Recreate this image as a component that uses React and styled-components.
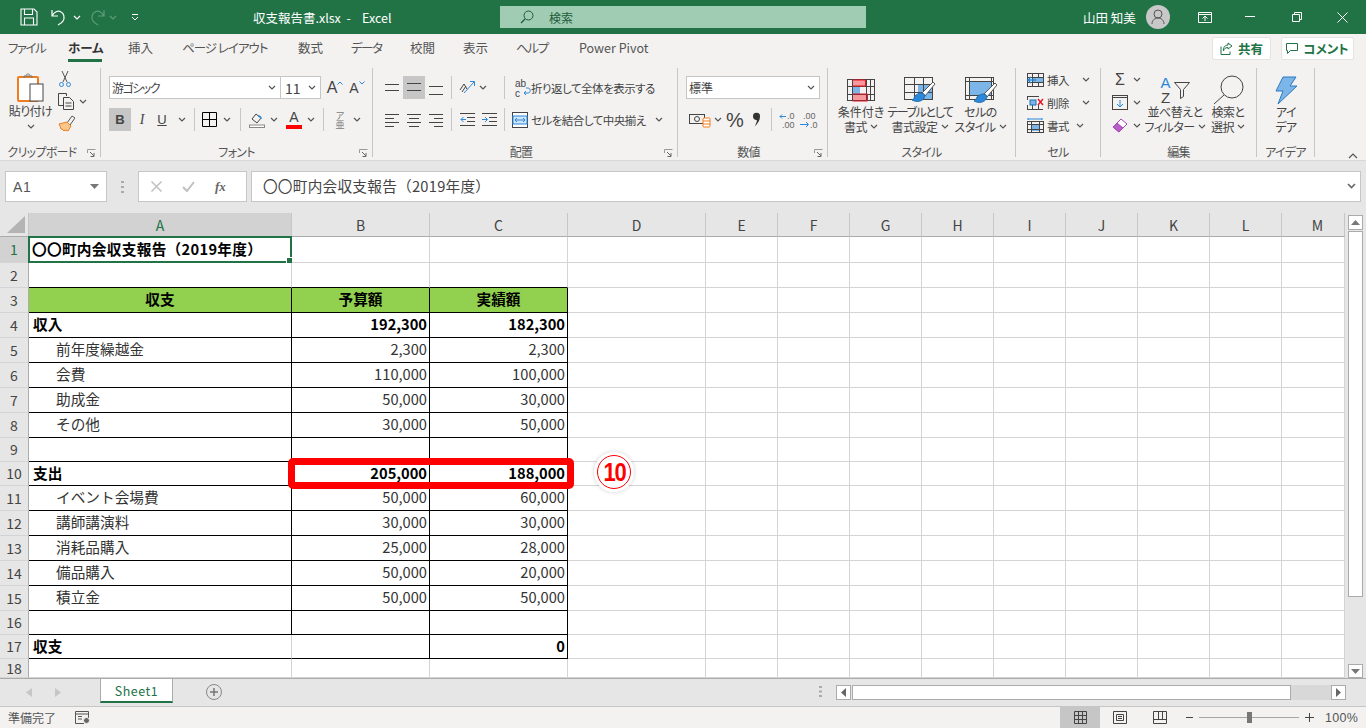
import React from "react";
import styled, { createGlobalStyle } from "styled-components";

const GREEN = "#217346";
const UI = `"Noto Sans CJK JP", "Noto Sans", sans-serif`;

const Global = createGlobalStyle`
  html, body { margin: 0; padding: 0; background: #fff; overflow: hidden; }
  * { box-sizing: border-box; }
  body { font-family: ${UI}; font-feature-settings: "palt"; color: #444; }
`;

const Page = styled.div`
  width: 1366px;
  height: 728px;
  display: flex;
  flex-direction: column;
  overflow: hidden;
`;

/* ---------- title bar ---------- */
const TitleBar = styled.div`
  height: 34px;
  flex: none;
  background: ${GREEN};
  display: flex;
  align-items: center;
  color: #fff;
  font-size: 12.5px;
`;
const Slot = styled.div`
  width: ${(p) => p.$w}px;
  flex: none;
  display: flex;
  align-items: center;
  justify-content: ${(p) => p.$justify || "flex-start"};
  margin-left: ${(p) => p.$ml || 0}px;
  margin-top: ${(p) => p.$mt || 0}px;
  white-space: nowrap;
`;
const SearchBox = styled.div`
  width: 366px;
  height: 22px;
  background: #a0ccb3;
  color: #1d5c3a;
  display: flex;
  align-items: center;
  gap: 15px;
  padding-left: 20px;
  font-size: 12px;
`;
const Avatar = styled.div`
  width: 24px;
  height: 24px;
  border-radius: 50%;
  background: #c8c8c8;
  display: flex;
  align-items: center;
  justify-content: center;
`;

/* ---------- tabs ---------- */
const TabRow = styled.div`
  height: 28px;
  flex: none;
  background: #f3f2f1;
  display: flex;
  align-items: center;
  padding-left: 8px;
`;
const Tab = styled.div`
  width: ${(p) => p.$w}px;
  flex: none;
  font-size: 12.5px;
  height: 28px;
  line-height: 28px;
  white-space: nowrap;
  position: relative;
  letter-spacing: ${(p) => p.$sp || 0}px;
  color: ${(p) => (p.$active ? "#333" : "#555")};
  font-weight: ${(p) => (p.$active ? 700 : 400)};
  &::after {
    content: "";
    display: ${(p) => (p.$active ? "block" : "none")};
    position: absolute;
    left: 0;
    top: 25px;
    width: 34px;
    height: 3px;
    background: ${GREEN};
  }
`;
const ShareBtn = styled.div`
  width: ${(p) => p.$w}px;
  height: 23px;
  margin-left: ${(p) => p.$ml}px;
  background: #fff;
  border: 1px solid #e4e3e2;
  border-radius: 2px;
  color: ${GREEN};
  font-weight: 700;
  font-size: 12.5px;
  display: flex;
  align-items: center;
  justify-content: center;
  gap: 5px;
`;

/* ---------- ribbon ---------- */
const Ribbon = styled.div`
  height: 99px;
  flex: none;
  background: #f3f2f1;
  display: flex;
  padding-top: 6px;
  border-bottom: 1px solid #d8d8d8;
  position: relative;
`;
const Group = styled.div`
  width: ${(p) => p.$w}px;
  height: 89px;
  flex: none;
  border-right: 1px solid #c6c6c6;
  display: flex;
  flex-direction: column;
`;
const GroupBody = styled.div`
  height: 76px;
  flex: none;
  display: flex;
  flex-direction: ${(p) => p.$dir || "row"};
  padding: ${(p) => p.$pad || "0"};
  gap: ${(p) => p.$gap || 0}px;
`;
const GroupFoot = styled.div`
  height: 13px;
  line-height: 16px;
  font-size: 12px;
  letter-spacing: -0.7px;
  color: #555;
  white-space: nowrap;
  text-align: center;
  position: relative;
  padding-right: ${(p) => p.$shift || 0}px;
`;
const Launcher = styled.svg`
  position: absolute;
  right: 4px;
  top: 5px;
`;
const Row = styled.div`
  height: 23px;
  display: flex;
  align-items: center;
  flex: none;
`;
const Select = styled.div`
  width: ${(p) => p.$w}px;
  height: 23px;
  background: #fff;
  border: 1px solid #c6c6c6;
  border-left-width: ${(p) => (p.$joined ? 0 : 1)}px;
  display: flex;
  align-items: center;
  justify-content: space-between;
  padding: 0 4px 0 ${(p) => p.$pl || 2}px;
  font-size: ${(p) => p.$size || 12}px;
  letter-spacing: ${(p) => p.$sp || 0}px;
  color: #444;
  flex: none;
  white-space: nowrap;
`;
const ToolBtn = styled.div`
  width: ${(p) => p.$w || 22}px;
  height: 23px;
  margin-left: ${(p) => p.$ml || 0}px;
  background: ${(p) => (p.$on ? "#c6c6c6" : "transparent")};
  display: flex;
  flex-direction: ${(p) => p.$dir || "row"};
  align-items: center;
  justify-content: center;
  flex: none;
  position: relative;
`;
const Glyph = styled.span`
  font-family: ${(p) => p.$font || `"Liberation Sans", sans-serif`};
  font-size: ${(p) => p.$size || 14}px;
  font-weight: ${(p) => p.$weight || 400};
  font-style: ${(p) => (p.$italic ? "italic" : "normal")};
  text-decoration: ${(p) => (p.$under ? "underline" : "none")};
  color: ${(p) => p.$color || "#444"};
  line-height: 1;
  text-align: center;
`;
const ColorBar = styled.div`
  width: 16px;
  height: 4px;
  background: #ff0000;
  flex: none;
  margin-top: 1px;
`;
const Caret = styled.svg`
  flex: none;
  margin-bottom: 9px;
`;
const VSep = styled.div`
  width: 1px;
  height: 23px;
  background: #c6c6c6;
  flex: none;
  margin-left: ${(p) => p.$ml || 0}px;
`;
const ChevSvg = styled.svg`
  flex: none;
  margin-left: ${(p) => p.$ml}px;
`;
const Chevron = ({ ml = 0, color = "#555" }) => (
  <ChevSvg width="8" height="5" viewBox="0 0 8 5" $ml={ml}>
    <path d="M1 1l3 3 3-3" fill="none" stroke={color} strokeWidth="1.2" />
  </ChevSvg>
);
const RowLabel = styled.span`
  font-size: 11.5px;
  letter-spacing: -0.5px;
  color: #444;
  white-space: nowrap;
  flex: none;
  margin-left: ${(p) => p.$ml || 0}px;
`;
const BigBtn = styled.div`
  width: ${(p) => p.$w}px;
  margin-left: ${(p) => p.$ml || 0}px;
  padding-top: ${(p) => p.$top || 7}px;
  flex: none;
  display: flex;
  flex-direction: column;
  align-items: center;
`;
const IconBox = styled.div`
  height: ${(p) => p.$h || 30}px;
  display: flex;
  align-items: center;
  justify-content: center;
`;
const SortLetters = styled.div`
  display: flex;
  flex-direction: column;
  flex: none;
  margin-right: 3px;
`;
const BigLabel = styled.div`
  font-size: 12px;
  line-height: 14.5px;
  letter-spacing: ${(p) => p.$sp ?? -0.5}px;
  color: #444;
  text-align: center;
  white-space: nowrap;
  display: flex;
  align-items: center;
  gap: 3px;
  justify-content: center;
`;
const StackCol = styled.div`
  display: flex;
  flex-direction: column;
  flex: none;
  padding: ${(p) => p.$pad || 0};
  gap: ${(p) => p.$gap || 0}px;
`;

/* ---------- formula bar ---------- */
const FormulaArea = styled.div`
  height: 52px;
  flex: none;
  background: #e6e6e6;
  display: flex;
  align-items: flex-start;
  padding: 10px 5px 0 5px;
`;
const NameBox = styled.div`
  width: 102px;
  height: 31px;
  background: #fff;
  border: 1px solid #c6c6c6;
  display: flex;
  align-items: center;
  justify-content: space-between;
  padding: 0 7px 0 7px;
  font-family: "Liberation Sans", sans-serif;
  font-size: 14px;
  color: #555;
  letter-spacing: 0.6px;
`;
const Grip = styled.div`
  width: 31px;
  height: 31px;
  flex: none;
  display: flex;
  align-items: center;
  justify-content: center;
`;
const FxBox = styled.div`
  width: 109px;
  height: 31px;
  background: #fff;
  border: 1px solid #c6c6c6;
  display: flex;
  align-items: center;
  padding-left: 12px;
  gap: 20px;
  flex: none;
`;
const FormulaInput = styled.div`
  width: 1111px;
  height: 31px;
  margin-left: 4px;
  background: #fff;
  border: 1px solid #c6c6c6;
  display: flex;
  align-items: center;
  justify-content: space-between;
  padding: 0 4px 2px 11px;
  font-size: 14.67px;
  letter-spacing: 0.25px;
  font-feature-settings: normal;
  text-spacing-trim: space-all;
  color: #444;
`;

/* ---------- sheet ---------- */
const SheetArea = styled.div`
  height: 465px;
  flex: none;
  display: flex;
  position: relative;
  background: #e6e6e6;
`;
const SheetGrid = styled.div`
  width: 1345px;
  flex: none;
  display: grid;
  grid-template-columns: 29px 263px 138px 138px 138px repeat(8, 72px) 63px;
  grid-template-rows: ${(p) => p.$rows};
  font-size: 14.67px;
  font-feature-settings: normal;
  text-spacing-trim: space-all;
`;
const Corner = styled.div`
  background: #e6e6e6;
  border-right: 1px solid #c6c6c6;
  border-bottom: 1px solid #ababab;
  display: flex;
  align-items: flex-end;
  justify-content: flex-end;
  padding: 0 3px 3px 0;
`;
const ColHead = styled.div`
  background: ${(p) => (p.$active ? "#d2d2d2" : "#e6e6e6")};
  color: ${(p) => (p.$active ? GREEN : "#444")};
  border-right: 1px solid #c6c6c6;
  border-bottom: 1px solid #ababab;
  display: flex;
  align-items: center;
  justify-content: center;
  font-size: 14px;
  padding-top: 1px;
  padding-left: ${(p) => (p.$cut ? 9 : 0)}px;
`;
const RowHead = styled.div`
  background: ${(p) => (p.$active ? "#d2d2d2" : "#e6e6e6")};
  color: ${(p) => (p.$active ? GREEN : "#444")};
  border-right: 1px solid #ababab;
  border-bottom: 1px solid #d4d4d4;
  display: flex;
  align-items: center;
  justify-content: center;
  font-size: 14px;
  padding-bottom: 1px;
`;
const Cell = styled.div`
  background: ${(p) => p.$fill || "#fff"};
  border-right: 1px solid ${(p) => (p.$blackRight ? "#000" : "#d4d4d4")};
  border-bottom: 1px solid ${(p) => (p.$blackBottom ? "#000" : "#d4d4d4")};
  display: flex;
  align-items: center;
  justify-content: ${(p) => p.$justify || "flex-start"};
  padding-left: ${(p) => p.$indent || 0}px;
  padding-right: ${(p) => (p.$justify === "flex-end" ? 2 : 0)}px;
  padding-bottom: 3px;
  letter-spacing: ${(p) => p.$sp || 0}px;
  font-weight: ${(p) => (p.$bold ? 700 : 400)};
  color: ${(p) => (p.$bold ? "#000" : "#333")};
  white-space: nowrap;
  min-width: 0;
  overflow: visible;
  position: relative;
`;
const Selection = styled.div`
  position: absolute;
  left: -1px;
  top: -1px;
  right: -1px;
  bottom: -1px;
  border: 2px solid ${GREEN};
  pointer-events: none;
  &::after {
    content: "";
    position: absolute;
    right: -4px;
    bottom: -4px;
    width: 6px;
    height: 6px;
    background: ${GREEN};
    border: 1px solid #fff;
  }
`;
const RedFrame = styled.div`
  position: absolute;
  left: 288px;
  top: 245px;
  width: 286px;
  height: 31px;
  border: 7px solid #ff0000;
  border-radius: 5px;
`;
const Badge = styled.div`
  position: absolute;
  left: 594px;
  top: 239px;
  width: 40px;
  height: 40px;
  border-radius: 50%;
  background: #fff;
  box-shadow: 0 0 4px rgba(0, 0, 0, 0.18);
  display: flex;
  align-items: center;
  justify-content: center;
`;
const BadgeRing = styled.div`
  width: 34px;
  height: 34px;
  border-radius: 50%;
  border: 1px solid #ff0000;
  display: flex;
  align-items: center;
  justify-content: center;
`;
const BadgeNum = styled.span`
  color: #ff0000;
  font-family: "Liberation Sans", sans-serif;
  font-weight: 700;
  font-size: 25px;
  letter-spacing: -1.5px;
  transform: scaleX(0.88);
`;

const VScroll = styled.div`
  width: 21px;
  flex: none;
  display: flex;
  flex-direction: column;
  padding: 2px 0 0 3px;
`;
const ScrollBtn = styled.div`
  width: ${(p) => p.$w || 15}px;
  height: ${(p) => p.$h || 15}px;
  margin-top: ${(p) => (p.$end ? "auto" : "0")};
  background: #fff;
  border: 1px solid #ababab;
  display: flex;
  align-items: center;
  justify-content: center;
  flex: none;
`;
const VThumb = styled.div`
  width: 15px;
  height: 366px;
  margin-top: 1px;
  background: #fff;
  border: 1px solid #ababab;
  flex: none;
`;

/* ---------- sheet tabs, status ---------- */
const TabsBar = styled.div`
  height: 29px;
  flex: none;
  background: #e6e6e6;
  border-top: 1px solid #ababab;
  border-bottom: 1px solid #c6c6c6;
  display: flex;
  align-items: flex-start;
  position: relative;
`;
const SheetTab = styled.div`
  width: 73px;
  height: 25px;
  margin-top: -1px;
  background: #fff;
  border: 1px solid #ababab;
  border-bottom: 2px solid ${GREEN};
  color: ${GREEN};
  font-size: 12.5px;
  display: flex;
  align-items: center;
  justify-content: center;
  letter-spacing: 0.5px;
  flex: none;
`;
const HScroll = styled.div`
  display: flex;
  flex: none;
`;
const HThumb = styled.div`
  width: 439px;
  height: 15px;
  margin-left: 1px;
  background: #fff;
  border: 1px solid #ababab;
  flex: none;
`;
const HTrack = styled.div`
  width: 40px;
  height: 15px;
  background: #d8d8d8;
  flex: none;
`;
const StatusBar = styled.div`
  height: 21px;
  flex: none;
  background: #f3f2f1;
  display: flex;
  align-items: center;
  font-size: 12px;
  color: #555;
`;
const ViewBtn = styled.div`
  width: 40px;
  height: 21px;
  background: ${(p) => (p.$on ? "#c6c6c6" : "transparent")};
  display: flex;
  align-items: center;
  justify-content: center;
  flex: none;
`;
const SliderTrack = styled.div`
  width: 100px;
  height: 1px;
  background: #a6a6a6;
  margin-left: 6px;
  position: relative;
  flex: none;
  &::after {
    content: "";
    position: absolute;
    left: 48px;
    top: -5px;
    width: 5px;
    height: 11px;
    background: #777;
  }
`;
const Zoom = styled.div`
  margin-left: 11px;
  font-size: 12.5px;
  font-family: "Liberation Sans", sans-serif;
  color: #555;
  letter-spacing: 0.3px;
  flex: none;
`;

/* ---------- icons ---------- */
const IconSvg = styled.svg`
  flex: none;
  display: block;
`;
const Svg = ({ w, h, children }) => (
  <IconSvg width={w} height={h} viewBox={`0 0 ${w} ${h}`} fill="none">
    {children}
  </IconSvg>
);
const DARK = "#444";
const BLUE = "#2b88d8";
const ORANGE = "#ed7d1f";
const SVGFONT = "Liberation Sans, sans-serif";

const LauncherIcon = () => (
  <Launcher width="9" height="9" viewBox="0 0 9 9" fill="none">
    <path d="M0.5 4V0.5H8.5" stroke="#999" />
    <path d="M3 3l4 4M7 4v3.5H3.5" stroke="#666" />
  </Launcher>
);
const Lines = ({ w = 14, h = 15, ys }) => (
  <Svg w={w} h={h}>
    {ys.map(([x1, x2, y]) => (
      <path key={`${y}-${x1}`} d={`M${x1} ${y}.5H${x2}`} stroke={DARK} />
    ))}
  </Svg>
);
const Grid3 = ({ w, h, cols, rows, color = DARK }) => (
  <g stroke={color}>
    <rect x="0.5" y="0.5" width={w - 1} height={h - 1} />
    {cols.map((x) => <path key={x} d={`M${x}.5 0V${h}`} />)}
    {rows.map((y) => <path key={y} d={`M0 ${y}.5H${w}`} />)}
  </g>
);
const Brush = ({ x, y }) => (
  <g transform={`translate(${x} ${y})`}>
    <path d="M10 11L21 0l2 2-10 12z" fill="#fff" stroke="#555" />
    <path d="M3 14c3-3 7-4 9-2s0 6-4 7c-3 1-6 0-8-1 2-1 2-2 3-4z" fill={BLUE} stroke="#1f6fb2" />
  </g>
);

const CELLS = [
  ["挿入", 13,
    <Svg w={17} h={14} key="i">
      <Grid3 w={17} h={14} cols={[5, 11]} rows={[4, 9]} />
      <rect x="6" y="5" width="10" height="4" fill="#7cb5e8" />
      <path d="M9 7H1M4 4L1 7l3 3" stroke={BLUE} strokeWidth="1.3" />
    </Svg>],
  ["削除", 13,
    <Svg w={17} h={14} key="d">
      <path d="M0 .5h12M0 13.500h16M.5 0v4M.5 9v5M5.500 9v5M11.500 9v5" stroke={DARK} />
      <rect x="3" y="4" width="6" height="5" fill="#7cb5e8" stroke="#1f6fb2" />
      <path d="M11 3l5 6M16 3l-5 6" stroke="#e81123" strokeWidth="1.4" />
    </Svg>],
  ["書式", 7,
    <Svg w={17} h={15} key="f">
      <path d="M1 1h14M1 0v2M15 0v2" stroke={BLUE} />
      <g transform="translate(0 3)">
        <rect x="4" y="3" width="9" height="7" fill="#7cb5e8" />
        <Grid3 w={17} h={12} cols={[4, 12]} rows={[3, 8]} />
      </g>
    </Svg>],
];

const TABS = [
  ["ファイル", 60, -1.5], ["ホーム", 60, 0, true], ["挿入", 54, 0], ["ページ レイアウト", 116, -1], ["数式", 53, 0],
  ["データ", 59, -1.5], ["校閲", 53, 0], ["表示", 53, 0], ["ヘルプ", 63, -1.3], ["Power Pivot", 80, 0],
];

const COLS = "ABCDEFGHIJKLM".split("");
const HEIGHTS = [26, 25, 25, 25, 25, 25, 25, 25, 24, 24, 25, 25, 25, 25, 25, 24, 24, 19];
const SHEET = {
  1: { a: "〇〇町内会収支報告（2019年度）", bold: true },
  2: {},
  3: { a: "収支", b: "予算額", c: "実績額", head: true },
  4: { a: "収入", b: "192,300", c: "182,300", bold: true },
  5: { a: "前年度繰越金", b: "2,300", c: "2,300", sub: true },
  6: { a: "会費", b: "110,000", c: "100,000", sub: true },
  7: { a: "助成金", b: "50,000", c: "30,000", sub: true },
  8: { a: "その他", b: "30,000", c: "50,000", sub: true },
  9: {},
  10: { a: "支出", b: "205,000", c: "188,000", bold: true },
  11: { a: "イベント会場費", b: "50,000", c: "60,000", sub: true },
  12: { a: "講師講演料", b: "30,000", c: "30,000", sub: true },
  13: { a: "消耗品購入", b: "25,000", c: "28,000", sub: true },
  14: { a: "備品購入", b: "50,000", c: "20,000", sub: true },
  15: { a: "積立金", b: "50,000", c: "50,000", sub: true },
  16: {},
  17: { a: "収支", c: "0", bold: true },
  18: {},
};

const renderRow = (n) => {
  const r = SHEET[n];
  const inTable = n >= 3 && n <= 17;
  const bottomBlack = n >= 2 && n <= 17;
  const fill = r.head ? "#92d050" : undefined;
  const justifyNum = r.head ? "center" : "flex-end";
  const cells = [<RowHead key={`h${n}`} $active={n === 1}>{n}</RowHead>];
  cells.push(
    <Cell
      key={`a${n}`}
      $blackRight={inTable && n !== 17}
      $blackBottom={bottomBlack}
      $fill={fill}
      $bold={r.bold || r.head}
      $sp={n === 1 ? 0.3 : 0}
      $justify={r.head ? "center" : undefined}
      $indent={r.head ? 0 : r.sub ? 27 : n === 1 ? 3 : 4}
    >
      {r.a}
      {n === 1 && <Selection />}
    </Cell>
  );
  cells.push(
    <Cell key={`b${n}`} $blackRight={inTable} $blackBottom={bottomBlack} $fill={fill} $bold={r.bold || r.head} $justify={justifyNum}>
      {r.b}
    </Cell>
  );
  cells.push(
    <Cell key={`c${n}`} $blackRight={inTable} $blackBottom={bottomBlack} $fill={fill} $bold={r.bold || r.head} $justify={justifyNum}>
      {r.c}
    </Cell>
  );
  COLS.slice(3).forEach((c) => cells.push(<Cell key={`${c}${n}`} />));
  return cells;
};

const App = () => (
  <Page>
    <Global />
    <TitleBar>
      <Slot $w={18} $ml={20}>
        <Svg w={18} h={18}>
          <path d="M1 1h13l3 3v13H1zM4.500 1v5.500h8V1M4.500 17v-7h9v7" stroke="#fff" strokeWidth="1.1" />
        </Svg>
      </Slot>
      <Slot $w={17} $ml={12}>
        <Svg w={17} h={18}>
          <path d="M2 2v6h6M2 8c2-4 6-6 9-4 3 1 4 6 2 9-1 2-3 3-5 4" stroke="#fff" strokeWidth="1.2" />
        </Svg>
      </Slot>
      <Slot $w={8} $ml={6}><Chevron color="#fff" /></Slot>
      <Slot $w={17} $ml={8}>
        <Svg w={17} h={18}>
          <path d="M15 2v6H9M15 8c-2-4-6-6-9-4-3 1-4 6-2 9 1 2 3 3 5 4" stroke="#5f9c7b" strokeWidth="1.2" />
        </Svg>
      </Slot>
      <Slot $w={8} $ml={3}><Chevron color="#5f9c7b" /></Slot>
      <Slot $w={8} $ml={14}>
        <Svg w={8} h={8}>
          <path d="M1 1.500h6M1 4l3 3 3-3" stroke="#fff" />
        </Svg>
      </Slot>
      <Slot $w={247} $ml={114}>収支報告書.xlsx&nbsp;&nbsp;-&nbsp;&nbsp;&nbsp;&nbsp;Excel</Slot>
      <SearchBox>
        <Svg w={14} h={14}>
          <circle cx="8.500" cy="5.500" r="4.500" stroke="#1d5c3a" />
          <path d="M5 9l-4 4" stroke="#1d5c3a" strokeWidth="1.2" />
        </Svg>
        検索
      </SearchBox>
      <Slot $w={60} $ml={217}>山田 知美</Slot>
      <Slot $w={24} $ml={3}>
        <Avatar>
          <Svg w={14} h={16}>
            <circle cx="7" cy="5" r="4" stroke="#555" />
            <path d="M1 15c0-4 3-6 6-6s6 2 6 6" stroke="#555" />
          </Svg>
        </Avatar>
      </Slot>
      <Slot $w={14} $ml={28}>
        <Svg w={14} h={11}>
          <path d="M.5.500h13v10H.5zM.5 2.500h13M7 9V4.500M4.500 6.500L7 4l2.500 2.500" stroke="#fff" />
        </Svg>
      </Slot>
      <Slot $w={10} $ml={33}>
        <Svg w={10} h={2}><path d="M0 .5h10" stroke="#fff" /></Svg>
      </Slot>
      <Slot $w={10} $ml={37}>
        <Svg w={10} h={10}><path d="M.5 2.500h7v7h-7zM2.500 2.500v-2h7v7h-2" stroke="#fff" /></Svg>
      </Slot>
      <Slot $w={11} $ml={35}>
        <Svg w={11} h={11}><path d="M.5.500l10 10M10.500.5l-10 10" stroke="#fff" /></Svg>
      </Slot>
    </TitleBar>

    <TabRow>
      {TABS.map(([t, w, sp, active]) => (
        <Tab key={t} $w={w} $sp={sp} $active={active}>{t}</Tab>
      ))}
      <ShareBtn $w={59} $ml={553}>
        <Svg w={13} h={13}>
          <path d="M8 1l4 3-4 3V5.500C5 5.500 4 7 3.500 9 3 6 4.500 3 8 3zM1 4.500v8h9v-3" stroke={GREEN} />
        </Svg>
        共有
      </ShareBtn>
      <ShareBtn $w={73} $ml={10}>
        <Svg w={12} h={12}>
          <path d="M.5 1.500h11v7h-7l-3 3v-3h-1z" stroke={GREEN} />
        </Svg>
        コメント
      </ShareBtn>
    </TabRow>

    <Ribbon>
      {/* clipboard */}
      <Group $w={101}>
        <GroupBody>
          <BigBtn $w={45} $ml={8} $top={3}>
            <IconBox $h={33}>
              <Svg w={28} h={30}>
                <rect x="1" y="4" width="20" height="24" rx="1" fill="#fff" stroke={ORANGE} strokeWidth="2" />
                <path d="M7 5V3h8v2M9 2.500c0-2 4-2 4 0" stroke="#777" />
                <rect x="13" y="11" width="13" height="17" fill="#fff" stroke={DARK} />
              </Svg>
            </IconBox>
            <BigLabel>貼り付け</BigLabel>
            <IconBox $h={16}><Chevron /></IconBox>
          </BigBtn>
          <StackCol $pad="2px 0 0 5px" $gap={5}>
            <Slot $w={30}>
              <Svg w={14} h={18}>
                <path d="M4 1l5 11M10 1L5 12" stroke="#555" />
                <circle cx="3.500" cy="14.500" r="2" stroke={BLUE} />
                <circle cx="10.500" cy="14.500" r="2" stroke={BLUE} />
              </Svg>
            </Slot>
            <Slot $w={30}>
              <Svg w={17} h={17}>
                <path d="M5 12.500H.5v-12h8V3" stroke={DARK} />
                <path d="M5.500 4.500h6l4 4v8h-10zM7.500 10h6M7.500 13h6" stroke={DARK} />
              </Svg>
              <Chevron ml={4} />
            </Slot>
            <Slot $w={30}>
              <Svg w={17} h={17}>
                <path d="M9 8l5-7 3 2-5 7z" stroke="#555" />
                <path d="M1 9l8-2 4 4-3 5-3-1-1 1-2-2-1 0-1-3z" fill="#f9c78c" stroke={ORANGE} />
              </Svg>
            </Slot>
          </StackCol>
        </GroupBody>
        <GroupFoot $shift={16}>クリップボード<LauncherIcon /></GroupFoot>
      </Group>

      {/* font */}
      <Group $w={272}>
        <GroupBody $dir="column" $pad="8px 0 0 8px" $gap={9}>
          <Row>
            <Select $w={172} $sp={-1.5}>游ゴシック<Chevron /></Select>
            <Select $w={40} $joined $size={14} $pl={4}>11<Chevron /></Select>
            <ToolBtn $w={16} $ml={6}>
              <Glyph $size={16}>A</Glyph>
              <Caret width="6" height="4" viewBox="0 0 6 4" fill="none"><path d="M.5 3.500L3 1l2.500 2.500" stroke={BLUE} /></Caret>
            </ToolBtn>
            <ToolBtn $w={16} $ml={6}>
              <Glyph $size={14}>A</Glyph>
              <Caret width="6" height="4" viewBox="0 0 6 4" fill="none"><path d="M.5.500L3 3 5.500.5" stroke={BLUE} /></Caret>
            </ToolBtn>
          </Row>
          <Row>
            <ToolBtn $on><Glyph $weight={700} $size={13}>B</Glyph></ToolBtn>
            <ToolBtn $w={16} $ml={3}><Glyph $italic $size={14} $font={`"Liberation Serif", serif`}>I</Glyph></ToolBtn>
            <ToolBtn $w={16} $ml={4}><Glyph $under $size={13}>U</Glyph></ToolBtn>
            <Chevron ml={8} />
            <VSep $ml={8} />
            <ToolBtn $w={15} $ml={7}>
              <Svg w={15} h={15}><path d="M.5.500h14v14H.5zM7.500.5v14M.5 7.500h14" stroke="#000" /></Svg>
            </ToolBtn>
            <Chevron ml={6} />
            <VSep $ml={9} />
            <ToolBtn $w={16} $ml={8}>
              <Svg w={16} h={16}>
                <path d="M3 7l4-5 5 4-4 5z" stroke={DARK} />
                <path d="M9 4c2 0 3 1 3 3" stroke={BLUE} strokeWidth="1.5" />
                <rect x=".5" y="13" width="15" height="2.500" fill="#fff" stroke="#888" />
              </Svg>
            </ToolBtn>
            <Chevron ml={5} />
            <ToolBtn $w={16} $ml={8} $dir="column">
              <Glyph $size={14}>A</Glyph>
              <ColorBar />
            </ToolBtn>
            <Chevron ml={5} />
            <VSep $ml={8} />
            <ToolBtn $w={12} $ml={10} $dir="column">
              <Glyph $size={9} $font={UI} $color="#777">ア</Glyph>
              <Glyph $size={9} $font={UI} $color="#777">亜</Glyph>
            </ToolBtn>
            <Chevron ml={7} />
          </Row>
        </GroupBody>
        <GroupFoot>フォント<LauncherIcon /></GroupFoot>
      </Group>

      {/* alignment */}
      <Group $w={305}>
        <GroupBody $dir="column" $pad="8px 0 0 12px" $gap={9}>
          <Row>
            <Lines ys={[[0, 14, 4], [0, 14, 10]]} />
            <ToolBtn $ml={4} $on $w={22}><Lines ys={[[0, 14, 3], [0, 14, 10]]} /></ToolBtn>
            <ToolBtn $w={14} $ml={4}><Lines ys={[[0, 14, 6], [0, 14, 14]]} /></ToolBtn>
            <VSep $ml={8} />
            <Slot $w={17} $ml={7}>
              <Svg w={17} h={15}>
                <path d="M1 10l4-6 3 5M7 6L3 12" stroke={DARK} />
                <path d="M5 13L15 2M11 1.500h4.500V6" stroke={BLUE} />
              </Svg>
            </Slot>
            <Chevron ml={3} />
            <VSep $ml={17} />
            <Slot $w={16} $ml={10}>
              <Svg w={16} h={20}>
                <text x="0" y="9" fontSize="10" fontFamily={SVGFONT} fill={DARK}>ab</text>
                <text x="0" y="19" fontSize="10" fontFamily={SVGFONT} fill={DARK}>c</text>
                <path d="M9 15h4c3 0 3-5 0-5h-2M9 15l2-2M9 15l2 2" stroke={BLUE} />
              </Svg>
            </Slot>
            <RowLabel>折り返して全体を表示する</RowLabel>
          </Row>
          <Row>
            <Lines ys={[[0, 14, 2], [0, 9, 6], [0, 14, 10], [0, 9, 14]]} />
            <ToolBtn $w={22} $ml={4}><Lines ys={[[0, 14, 2], [2, 12, 6], [0, 14, 10], [2, 12, 14]]} /></ToolBtn>
            <ToolBtn $w={14} $ml={4}><Lines ys={[[0, 14, 2], [5, 14, 6], [0, 14, 10], [5, 14, 14]]} /></ToolBtn>
            <VSep $ml={8} />
            <Slot $w={15} $ml={8}>
              <Svg w={15} h={14}>
                <path d="M0 .5h15M7 4.500h8M7 8.500h8M0 12.500h15" stroke={DARK} />
                <path d="M6 6.500H1M3.500 4L1 6.500 3.500 9" stroke={BLUE} />
              </Svg>
            </Slot>
            <Slot $w={15} $ml={7}>
              <Svg w={15} h={14}>
                <path d="M0 .5h15M7 4.500h8M7 8.500h8M0 12.500h15" stroke={DARK} />
                <path d="M0 6.500h5M3 4l2.500 2.500L3 9" stroke={BLUE} />
              </Svg>
            </Slot>
            <VSep $ml={7} />
            <Slot $w={16} $ml={7}>
              <Svg w={16} h={16}>
                <rect x=".5" y=".5" width="15" height="15" fill="#fff" stroke={DARK} />
                <rect x="1" y="4" width="14" height="8" fill="#cfe4f7" stroke={BLUE} />
                <path d="M3 8h10M5 6L3 8l2 2M11 6l2 2-2 2" stroke={BLUE} />
              </Svg>
            </Slot>
            <RowLabel $ml={3}>セルを結合して中央揃え</RowLabel>
            <Chevron ml={9} />
          </Row>
        </GroupBody>
        <GroupFoot $shift={8}>配置<LauncherIcon /></GroupFoot>
      </Group>

      {/* number */}
      <Group $w={150}>
        <GroupBody $dir="column" $pad="8px 0 0 8px" $gap={9}>
          <Row><Select $w={134}>標準<Chevron /></Select></Row>
          <Row>
            <Slot $w={22} $ml={3}>
              <Svg w={22} h={16}>
                <rect x=".5" y="2.500" width="15" height="9" stroke={DARK} />
                <circle cx="8" cy="7" r="2.500" stroke={DARK} />
                <rect x="14" y="6" width="7" height="9" rx="1" fill="#fff" stroke={ORANGE} />
                <path d="M14 9h7M14 12h7" stroke={ORANGE} />
              </Svg>
            </Slot>
            <Chevron ml={3} />
            <Slot $w={16} $ml={4}><Glyph $size={20}>%</Glyph></Slot>
            <Slot $w={10} $ml={10}>
              <Svg w={9} h={15}><path d="M1 4a3.500 3.500 0 1 1 7 .5c0 4-2.500 7.500-5.500 10 1.500-2.500 2.500-4.500 2.300-6.500A3.500 3.500 0 0 1 1 4z" fill="#333" /></Svg>
            </Slot>
            <VSep $ml={9} />
            <Slot $w={19} $ml={7}>
              <Svg w={19} h={18}>
                <text x="8" y="8" fontSize="9" fontFamily={SVGFONT} fill="#666">.0</text>
                <text x="3" y="17" fontSize="9" fontFamily={SVGFONT} fill="#666">.00</text>
                <path d="M7 5.500H1M3 3.500L1 5.500l2 2" stroke={BLUE} />
              </Svg>
            </Slot>
            <Slot $w={19} $ml={2}>
              <Svg w={19} h={18}>
                <text x="3" y="8" fontSize="9" fontFamily={SVGFONT} fill="#666">.00</text>
                <text x="10" y="17" fontSize="9" fontFamily={SVGFONT} fill="#666">.0</text>
                <path d="M0 13.500h8M6 11l2.500 2.500L6 16" stroke={BLUE} />
              </Svg>
            </Slot>
          </Row>
        </GroupBody>
        <GroupFoot $shift={8}>数値<LauncherIcon /></GroupFoot>
      </Group>

      {/* styles */}
      <Group $w={188}>
        <GroupBody>
          <BigBtn $w={64} $ml={1}>
            <IconBox>
              <Svg w={29} h={23}>
                <rect x="5" y="1" width="13" height="6" fill="#f7989c" />
                <rect x="5" y="8" width="8" height="7" fill="#7cb5e8" />
                <rect x="5" y="15" width="15" height="7" fill="#f7989c" />
                <Grid3 w={28} h={22} cols={[5, 19, 23]} rows={[7, 15]} />
                <path d="M5.500 1h13v6h-13M5.500 15h15v7h-15" stroke="#e81123" />
              </Svg>
            </IconBox>
            <BigLabel $sp={0}>条件付き</BigLabel>
            <BigLabel>書式<Chevron /></BigLabel>
          </BigBtn>
          <BigBtn $w={54}>
            <IconBox>
              <Svg w={32} h={27}>
                <rect x="14" y="8" width="14" height="14" fill="#7cb5e8" />
                <Grid3 w={29} h={23} cols={[10, 19]} rows={[7, 15]} />
                <Brush x={8} y={5} />
              </Svg>
            </IconBox>
            <BigLabel $sp={-1.4}>テーブルとして</BigLabel>
            <BigLabel>書式設定<Chevron /></BigLabel>
          </BigBtn>
          <BigBtn $w={67}>
            <IconBox>
              <Svg w={32} h={27}>
                <rect x="5" y="5" width="22" height="13" fill="#7cb5e8" />
                <Grid3 w={29} h={23} cols={[4, 26]} rows={[4, 18]} />
                <Brush x={9} y={6} />
              </Svg>
            </IconBox>
            <BigLabel>セルの</BigLabel>
            <BigLabel>スタイル<Chevron /></BigLabel>
          </BigBtn>
        </GroupBody>
        <GroupFoot>スタイル</GroupFoot>
      </Group>

      {/* cells */}
      <Group $w={85}>
        <GroupBody $dir="column" $pad="0 0 0 11px">
          {CELLS.map(([t, gap, icon]) => (
            <Row key={t}>
              <Slot $w={17}>{icon}</Slot>
              <RowLabel $ml={3}>{t}</RowLabel>
              <Chevron ml={gap} />
            </Row>
          ))}
        </GroupBody>
        <GroupFoot>セル</GroupFoot>
      </Group>

      {/* editing */}
      <Group $w={156}>
        <GroupBody>
          <StackCol $pad="0 0 0 11px">
            <Row>
              <Slot $w={16} $justify="center"><Glyph $size={16}>Σ</Glyph></Slot>
              <Chevron ml={5} />
            </Row>
            <Row>
              <Svg w={16} h={15}>
                <rect x=".5" y=".5" width="15" height="14" stroke={DARK} />
                <path d="M.5 2.500h15" stroke={DARK} />
                <path d="M8 5v7M5 9l3 3 3-3" stroke={BLUE} />
              </Svg>
              <Chevron ml={5} />
            </Row>
            <Row>
              <Svg w={16} h={15}>
                <path d="M1 9l8-8 6 5-8 8z" fill="#fff" stroke="#a347b5" />
                <path d="M1 9l4-4 6 5-4 4z" fill="#b95dc9" stroke="#a347b5" />
              </Svg>
              <Chevron ml={5} />
            </Row>
          </StackCol>
          <BigBtn $w={52} $ml={8}>
            <IconBox>
              <SortLetters>
                <Glyph $size={15} $color={BLUE}>A</Glyph>
                <Glyph $size={15}>Z</Glyph>
              </SortLetters>
              <Svg w={16} h={18}>
                <path d="M.5 1.500h15l-6 7v7l-3 2v-9z" stroke={DARK} />
              </Svg>
            </IconBox>
            <BigLabel>並べ替えと</BigLabel>
            <BigLabel>フィルター<Chevron /></BigLabel>
          </BigBtn>
          <BigBtn $w={54}>
            <IconBox>
              <Svg w={31} h={30}>
                <circle cx="19" cy="12" r="11" stroke={DARK} />
                <path d="M11 20L1 29" stroke={DARK} />
              </Svg>
            </IconBox>
            <BigLabel>検索と</BigLabel>
            <BigLabel>選択<Chevron /></BigLabel>
          </BigBtn>
        </GroupBody>
        <GroupFoot>編集</GroupFoot>
      </Group>

      {/* ideas */}
      <Group $w={58}>
        <GroupBody>
          <BigBtn $w={58}>
            <IconBox>
              <Svg w={23} h={29}>
                <path d="M8 1h13l-6 9h7L3 28l5-13H1z" fill="#7cb5e8" stroke="#2b79c2" />
              </Svg>
            </IconBox>
            <BigLabel>アイ</BigLabel>
            <BigLabel>デア</BigLabel>
          </BigBtn>
        </GroupBody>
        <GroupFoot>アイデア</GroupFoot>
      </Group>
      <Slot $w={10} $ml={33} $mt={84}>
        <Svg w={10} h={6}><path d="M1 5l4-4 4 4" stroke="#555" strokeWidth="1.2" /></Svg>
      </Slot>
    </Ribbon>

    <FormulaArea>
      <NameBox>
        A1
        <Svg w={9} h={5}><path d="M0 0h9L4.500 5z" fill="#777" /></Svg>
      </NameBox>
      <Grip>
        <Svg w={3} h={12}><path d="M0 1h3M0 6h3M0 11h3" stroke="#aaa" strokeWidth="2" /></Svg>
      </Grip>
      <FxBox>
        <Svg w={11} h={11}><path d="M.5.500l10 10M10.500.5l-10 10" stroke="#c0c0c0" strokeWidth="1.5" /></Svg>
        <Svg w={13} h={11}><path d="M1 6l4 4 7-9" stroke="#c0c0c0" strokeWidth="2" /></Svg>
        <Glyph $italic $weight={700} $size={13} $font={`"Liberation Serif", serif`} $color="#666">fx</Glyph>
      </FxBox>
      <FormulaInput>
        〇〇町内会収支報告（2019年度）
        <Svg w={9} h={6}><path d="M1 1l3.500 3.500L8 1" stroke="#666" strokeWidth="1.6" /></Svg>
      </FormulaInput>
    </FormulaArea>

    <SheetArea>
      <SheetGrid $rows={`24px ${HEIGHTS.map((h) => `${h}px`).join(" ")}`}>
        <Corner>
          <Svg w={18} h={17}><path d="M18 0v17H0z" fill="#b4b4b4" /></Svg>
        </Corner>
        {COLS.map((c) => (
          <ColHead key={c} $active={c === "A"} $cut={c === "M"}>{c}</ColHead>
        ))}
        {HEIGHTS.map((_, i) => renderRow(i + 1))}
      </SheetGrid>
      <VScroll>
        <ScrollBtn>
          <Svg w={9} h={5}><path d="M4.500 0L9 5H0z" fill="#777" /></Svg>
        </ScrollBtn>
        <VThumb />
        <ScrollBtn $h={14} $end>
          <Svg w={9} h={5}><path d="M0 0h9L4.500 5z" fill="#777" /></Svg>
        </ScrollBtn>
      </VScroll>
      <RedFrame />
      <Badge><BadgeRing><BadgeNum>10</BadgeNum></BadgeRing></Badge>
    </SheetArea>

    <TabsBar>
      <Slot $w={6} $ml={26} $mt={9}>
        <Svg w={6} h={9}><path d="M6 0v9L0 4.500z" fill="#c6c6c6" /></Svg>
      </Slot>
      <Slot $w={6} $ml={23} $mt={9}>
        <Svg w={6} h={9}><path d="M0 0v9l6-4.500z" fill="#c6c6c6" /></Svg>
      </Slot>
      <Slot $w={39} />
      <SheetTab>Sheet1</SheetTab>
      <Slot $w={16} $ml={33} $mt={5}>
        <Svg w={16} h={16}>
          <circle cx="8" cy="8" r="7.500" stroke="#888" />
          <path d="M8 4v8M4 8h8" stroke="#777" strokeWidth="1.500" />
        </Svg>
      </Slot>
      <Slot $w={3} $ml={597} $mt={7}>
        <Svg w={3} h={11}><path d="M0 1h3M0 5.500h3M0 10h3" stroke="#aaa" strokeWidth="2" /></Svg>
      </Slot>
      <Slot $w={14} $ml={14} $mt={6}>
        <HScroll>
          <ScrollBtn>
            <Svg w={5} h={9}><path d="M5 0v9L0 4.500z" fill="#666" /></Svg>
          </ScrollBtn>
          <HThumb />
          <HTrack />
          <ScrollBtn>
            <Svg w={5} h={9}><path d="M0 0v9l5-4.500z" fill="#666" /></Svg>
          </ScrollBtn>
        </HScroll>
      </Slot>
    </TabsBar>

    <StatusBar>
      <Slot $w={48} $ml={8}>準備完了</Slot>
      <Slot $w={15} $ml={19}>
        <Svg w={15} h={13}>
          <path d="M9 12.500H.5V.5h13V7M.5 3h13M3 5.500h4M3 8h4" stroke="#555" />
          <circle cx="11.500" cy="9.500" r="3" fill="#666" stroke="#f3f2f1" />
        </Svg>
      </Slot>
      <Slot $w={40} $ml={970}>
        <ViewBtn $on>
          <Svg w={13} h={13}><path d="M.5.500h12v12H.5zM4.500.5v12M8.500.5v12M.5 4.500h12M.5 8.500h12" stroke="#444" /></Svg>
        </ViewBtn>
      </Slot>
      <ViewBtn>
        <Svg w={14} h={13}><path d="M.5.500h13v12H.5zM3.500 3.500h7v6h-7zM5 5.500h4M5 7.500h4" stroke="#444" /></Svg>
      </ViewBtn>
      <ViewBtn>
        <Svg w={14} h={13}><path d="M.5.500h13v12H.5zM.5 8.500h13M5.500.5v8M9.500.5v8" stroke="#444" /></Svg>
      </ViewBtn>
      <Slot $w={7} $ml={6}><Svg w={7} h={1}><path d="M0 .5h7" stroke="#444" /></Svg></Slot>
      <SliderTrack />
      <Slot $w={9} $ml={6}><Svg w={9} h={9}><path d="M0 4.500h9M4.500 0v9" stroke="#444" /></Svg></Slot>
      <Zoom>100%</Zoom>
    </StatusBar>
  </Page>
);

export default App;
